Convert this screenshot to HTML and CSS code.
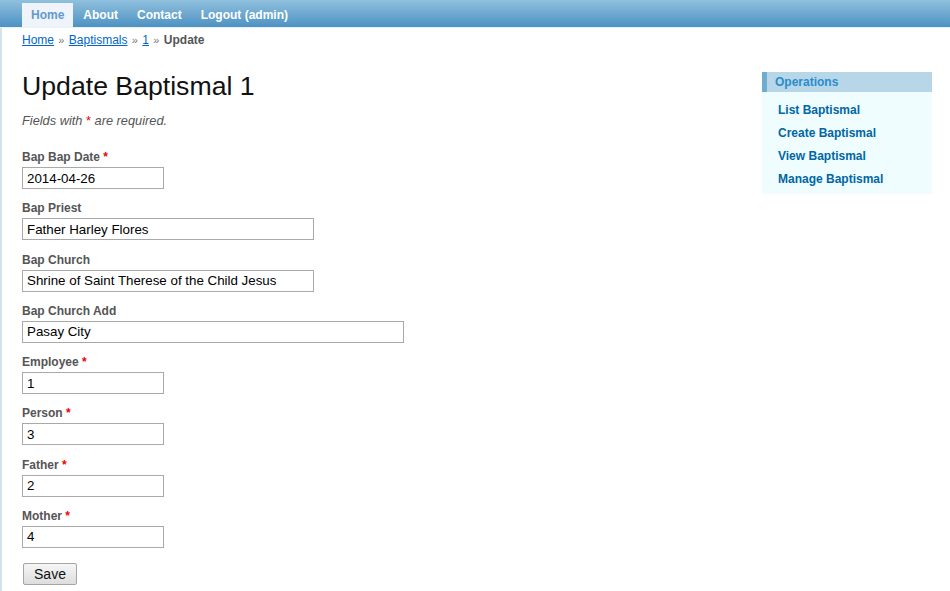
FILE: index.html
```html
<!DOCTYPE html>
<html>
<head>
<meta charset="utf-8">
<link rel="stylesheet" href="styles.css">
</head>
<body>
<div class="page">
  <div class="mainmenu">
    <ul>
      <li class="active"><a href="#">Home</a></li>
      <li><a href="#">About</a></li>
      <li><a href="#">Contact</a></li>
      <li><a href="#">Logout (admin)</a></li>
    </ul>
  </div>
  <div class="wrap">
    <div class="breadcrumbs">
      <a href="#">Home</a> <span class="sep">»</span> <a href="#">Baptismals</a> <span class="sep">»</span> <a href="#">1</a> <span class="sep">»</span> <span class="current">Update</span>
    </div>
    <div class="body-row">
      <div class="content">
        <h1>Update Baptismal 1</h1>
        <p class="note">Fields with <span class="required">*</span> are required.</p>
        <form class="form">
          <div class="row">
            <label>Bap Bap Date <span class="required">*</span></label>
            <input class="w-s" type="text" value="2014-04-26">
          </div>
          <div class="row">
            <label>Bap Priest</label>
            <input class="w-m" type="text" value="Father Harley Flores">
          </div>
          <div class="row">
            <label>Bap Church</label>
            <input class="w-m" type="text" value="Shrine of Saint Therese of the Child Jesus">
          </div>
          <div class="row">
            <label>Bap Church Add</label>
            <input class="w-l" type="text" value="Pasay City">
          </div>
          <div class="row">
            <label>Employee <span class="required">*</span></label>
            <input class="w-s" type="text" value="1">
          </div>
          <div class="row">
            <label>Person <span class="required">*</span></label>
            <input class="w-s" type="text" value="3">
          </div>
          <div class="row">
            <label>Father <span class="required">*</span></label>
            <input class="w-s" type="text" value="2">
          </div>
          <div class="row">
            <label>Mother <span class="required">*</span></label>
            <input class="w-s" type="text" value="4">
          </div>
          <div class="buttons">
            <button type="button" class="btn">Save</button>
          </div>
        </form>
      </div>
      <div class="sidebar">
        <div class="portlet-decoration">Operations</div>
        <ul class="operations">
          <li><a href="#">List Baptismal</a></li>
          <li><a href="#">Create Baptismal</a></li>
          <li><a href="#">View Baptismal</a></li>
          <li><a href="#">Manage Baptismal</a></li>
        </ul>
      </div>
    </div>
  </div>
</div>
</body>
</html>
```
FILE: styles.css
```css
* { box-sizing: border-box; }
html, body { margin: 0; padding: 0; background: #fff; }
body {
  font-family: "Liberation Sans", Arial, sans-serif;
  font-size: 13.33px;
  color: #555;
  width: 950px;
  height: 591px;
  overflow: hidden;
}
.page { border-left: 2px solid #d3e3ee; min-height: 591px; }

.mainmenu {
  height: 28px;
  background: linear-gradient(#90c0dd, #4d92c4);
  border-bottom: 1px solid #e6f3fa;
  margin-left: -2px;
}
.mainmenu ul {
  list-style: none;
  margin: 0;
  padding: 3px 0 0 22px;
  display: flex;
  gap: 1px;
  height: 27px;
}
.mainmenu li a {
  display: block;
  height: 24px;
  line-height: 24px;
  padding: 0 9px;
  font-size: 12px;
  font-weight: bold;
  color: #fff;
  text-decoration: none;
}
.mainmenu li.active a { background: #eff4fa; color: #6399cd; }

.wrap { padding-left: 20px; }

.breadcrumbs {
  margin-top: 3px;
  height: 18px;
  line-height: 18px;
  font-size: 12px;
  word-spacing: 1px;
}
.breadcrumbs a { color: #0066cc; text-decoration: underline; }
.breadcrumbs .sep { color: #777; font-size: 11px; }
.breadcrumbs .current { font-weight: bold; color: #555; }

.body-row { display: flex; }
.content { flex: 1; }

h1 {
  margin: 21px 0 0;
  font-size: 26.67px;
  line-height: 32px;
  font-weight: normal;
  color: #111;
}
.note {
  margin: 11px 0 0;
  font-size: 12.8px;
  line-height: 16px;
  font-style: italic;
}
.required { color: #e00; font-style: normal; }

.form { margin-top: 20px; }
.row { margin-bottom: 11.29px; }
.row label {
  display: block;
  font-size: 12px;
  font-weight: bold;
  line-height: 16px;
  margin-bottom: 2px;
}
.row input {
  display: block;
  height: 22px;
  border: 1px solid #a9a9a9;
  padding: 0 4px;
  font-family: "Liberation Sans", Arial, sans-serif;
  font-size: 13.33px;
  color: #000;
  background: #fff;
  margin: 0;
}
.w-s { width: 142px; }
.w-m { width: 292px; }
.w-l { width: 382px; }

.buttons { margin-top: 15px; padding-left: 1px; }
.btn {
  width: 54px;
  height: 22px;
  border: 1px solid #a5a5a5;
  border-radius: 2px;
  background: linear-gradient(#f6f6f6, #dddddd);
  font-family: "Liberation Sans", Arial, sans-serif;
  font-size: 14px;
  color: #111;
  padding: 0;
}

.sidebar {
  width: 170px;
  margin: 23px 18px 0 0;
  align-self: flex-start;
}
.portlet-decoration {
  height: 20px;
  line-height: 21px;
  padding: 0 8px;
  background: #b7d6e7;
  border-left: 5px solid #6facd0;
  font-size: 12px;
  font-weight: bold;
  color: #298dcd;
}
.operations {
  list-style: none;
  margin: 0;
  padding: 7px 8px 3px;
  background: #effdff;
}
.operations li a {
  display: block;
  height: 23px;
  line-height: 23px;
  padding-left: 8px;
  font-size: 12px;
  font-weight: bold;
  color: #0066a4;
  text-decoration: none;
}
```
